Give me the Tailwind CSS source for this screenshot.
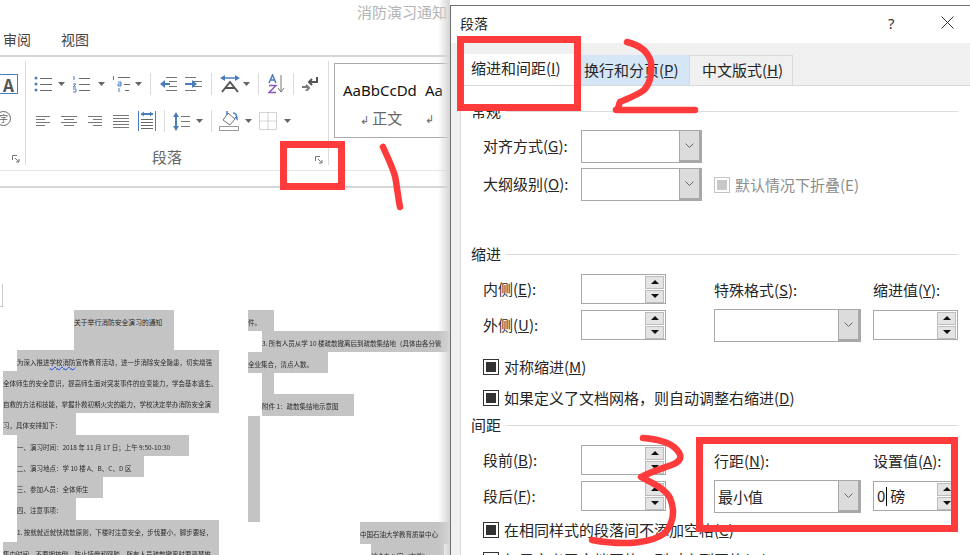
<!doctype html>
<html lang="zh-CN">
<head>
<meta charset="utf-8">
<script src="https://cdn.jsdelivr.net/npm/@tailwindcss/browser@4"></script>
<title>段落</title>
</head>
<body class="bg-white">
<div class="relative w-[970px] h-[555px] overflow-hidden bg-white text-[#262626] font-['Noto_Sans_CJK_SC','Noto_Sans',sans-serif]">

  <!-- Word window -->
  <div class="h-[23px] pl-[357px] text-[15px] leading-[23px] text-[#b4b4b4] whitespace-nowrap overflow-hidden">消防演习通知.docx</div>
  <div class="h-[34px] flex items-center text-[14px] text-[#444] border-b-2 border-[#d6d6d6]">
    <span class="ml-[3px]">审阅</span><span class="ml-[30px]">视图</span>
  </div>

  <div class="h-[113px] flex items-start overflow-hidden">
    <!-- font group tail -->
    <div class="w-[26px] h-[104px] mt-[4px] border-r border-[#dcdcdc] shrink-0">
      <div class="mt-[13px] w-[18px] h-[20px] border border-[#4a7ebb] border-l-0 flex items-center justify-center text-[17px] font-bold text-[#555] leading-none">A</div>
      <div class="mt-[17px] h-[20px] w-[11px] overflow-hidden flex justify-end">
        <div class="w-[15px] h-[15px] shrink-0 rounded-full border border-[#666] text-[9px] leading-[13px] text-center text-[#666]">字</div>
      </div>
      <div class="mt-[24px] pl-[12px]">
        <svg width="8" height="8" viewBox="0 0 8 8" fill="none" stroke="#777"><path d="M.5 5V.5H5M3 3l4 4M7 4v3H4"/></svg>
      </div>
    </div>

    <!-- paragraph group -->
    <div class="w-[303px] h-[104px] mt-[4px] border-r border-[#dcdcdc] shrink-0">
      <div class="mt-[13px] h-[20px] flex items-center">
        <svg class="ml-[8px]" width="18" height="18" viewBox="0 0 18 18" stroke="#6a6a6a"><circle cx="2" cy="3" r="1.5" fill="#4a7ebb" stroke="none"/><circle cx="2" cy="9" r="1.5" fill="#4a7ebb" stroke="none"/><circle cx="2" cy="15" r="1.5" fill="#4a7ebb" stroke="none"/><path d="M6 3.500h12M6 9.500h12M6 15.500h12"/></svg>
        <svg class="ml-[6px]" width="7" height="4" viewBox="0 0 7 4"><path d="M0 0h7L3.500 4z" fill="#666"/></svg>
        <svg class="ml-[7px]" width="18" height="18" viewBox="0 0 18 18" stroke="#6a6a6a"><path d="M2 1v4M1 9h3L1 12h3M1 14h3v3H1" stroke="#4a7ebb" fill="none"/><path d="M7 3.500h11M7 9.500h11M7 15.500h11"/></svg>
        <svg class="ml-[8px]" width="7" height="4" viewBox="0 0 7 4"><path d="M0 0h7L3.500 4z" fill="#666"/></svg>
        <svg class="ml-[7px]" width="18" height="18" viewBox="0 0 18 18" stroke="#6a6a6a" fill="none"><path d="M1.500 1v4" stroke="#4a7ebb"/><path d="M6 2.500h12M12 9.500h6M13 15.500h4"/><path d="M6 7h3v4H6v-2h3M7 13v4" stroke="#4a7ebb"/></svg>
        <svg class="ml-[5px]" width="7" height="4" viewBox="0 0 7 4"><path d="M0 0h7L3.500 4z" fill="#666"/></svg>
        <div class="ml-[8px] w-[1px] h-[22px] bg-[#dcdcdc]"></div>
        <svg class="ml-[9px]" width="17" height="14" viewBox="0 0 17 14" stroke="#777"><path d="M6 .500h11M9 4.500h8M9 9.500h8M6 13.500h11"/><path d="M0 7l5-4v3h5v2H5v3z" fill="#4a7ebb" stroke="none"/></svg>
        <svg class="ml-[8px]" width="17" height="14" viewBox="0 0 17 14" stroke="#777"><path d="M0 .500h11M8 4.500h9M8 9.500h9M0 13.500h11"/><path d="M12 7L7 3v3H0v2h7v3z" fill="#4a7ebb" stroke="none"/></svg>
        <div class="ml-[9px] w-[1px] h-[22px] bg-[#dcdcdc]"></div>
        <svg class="ml-[8px]" width="20" height="18" viewBox="0 0 20 18" fill="none"><path d="M4 3h12" stroke="#4a7ebb" stroke-width="1.500"/><path d="M0 3l5-3v6zM20 3l-5-3v6z" fill="#4a7ebb"/><path d="M2 17L10 7l8 10M5 13h10" stroke="#555" stroke-width="2"/></svg>
        <svg class="ml-[3px]" width="7" height="4" viewBox="0 0 7 4"><path d="M0 0h7L3.500 4z" fill="#666"/></svg>
        <div class="ml-[8px] w-[1px] h-[22px] bg-[#dcdcdc]"></div>
        <svg class="ml-[9px]" width="17" height="20" viewBox="0 0 17 20" fill="none"><path d="M1 9l3.500-8L8 9M2.500 6h4" stroke="#4a7ebb" stroke-width="1.500"/><path d="M1 11.500h7L1 18.500h7" stroke="#8a5bb5" stroke-width="1.500"/><path d="M13 1v17M10 14l3 4 3-4" stroke="#777"/></svg>
        <div class="ml-[8px] w-[1px] h-[22px] bg-[#dcdcdc]"></div>
        <svg class="ml-[8px]" width="16" height="14" viewBox="0 0 16 14" fill="none" stroke="#555" stroke-width="2"><path d="M15 0v5H8M10 2L7 5l3 3"/><path d="M0 10h6M4 8l3 3-3 3" stroke="#777"/></svg>
      </div>
      <div class="mt-[17px] h-[20px] flex items-center">
        <svg class="ml-[10px]" width="14" height="11" viewBox="0 0 14 11" stroke="#777"><path d="M0 .500h14M0 3.500h9M0 6.500h14M0 9.500h9"/></svg>
        <svg class="ml-[11px]" width="16" height="11" viewBox="0 0 16 11" stroke="#777"><path d="M0 .500h16M3 3.500h10M0 6.500h16M3 9.500h10"/></svg>
        <svg class="ml-[11px]" width="14" height="11" viewBox="0 0 14 11" stroke="#777"><path d="M0 .500h14M5 3.500h9M0 6.500h14M5 9.500h9"/></svg>
        <svg class="ml-[11px]" width="16" height="13" viewBox="0 0 16 13" stroke="#777"><path d="M0 .500h16M0 3.500h16M0 6.500h16M0 9.500h16M0 12.500h16"/></svg>
        <svg class="ml-[9px]" width="18" height="20" viewBox="0 0 18 20" fill="none"><path d="M.5 0v20M17.500 0v20" stroke="#4a7ebb"/><path d="M3 3h12" stroke="#4a7ebb" stroke-width="2"/><path d="M3 3l3-2.500v5zM15 3l-3-2.500v5z" fill="#4a7ebb"/><path d="M3 8.500h12M3 11.500h12M3 14.500h12M3 17.500h12" stroke="#666"/></svg>
        <div class="ml-[8px] w-[1px] h-[22px] bg-[#dcdcdc]"></div>
        <svg class="ml-[8px]" width="17" height="19" viewBox="0 0 17 19" fill="none"><path d="M3 2v15" stroke="#4a7ebb" stroke-width="2"/><path d="M3 0l3 5H0zM3 19l3-5H0z" fill="#4a7ebb"/><path d="M8 4.500h9M8 9.500h9M8 14.500h9" stroke="#777"/></svg>
        <svg class="ml-[6px]" width="7" height="4" viewBox="0 0 7 4"><path d="M0 0h7L3.500 4z" fill="#666"/></svg>
        <div class="ml-[8px] w-[1px] h-[22px] bg-[#dcdcdc]"></div>
        <svg class="ml-[7px]" width="20" height="20" viewBox="0 0 20 20" fill="none"><path d="M4 9l5-7 7 6-5 6z" stroke="#777"/><path d="M8 4V0M14 2c3 0 4 2 4 6l-2-2" stroke="#4a7ebb" stroke-width="1.500"/><path d="M.5 15.500h19v4H.5z" stroke="#999"/></svg>
        <svg class="ml-[6px]" width="7" height="4" viewBox="0 0 7 4"><path d="M0 0h7L3.500 4z" fill="#666"/></svg>
        <svg class="ml-[7px]" width="18" height="18" viewBox="0 0 18 18" fill="none" stroke="#aaa" stroke-dasharray="1 1"><path d="M.5.500h17v17H.5zM9 .500v17M.5 9h17"/></svg>
        <svg class="ml-[7px]" width="7" height="4" viewBox="0 0 7 4"><path d="M0 0h7L3.500 4z" fill="#666"/></svg>
      </div>
      <div class="mt-[17px] h-[17px] flex items-center justify-between pl-[126px] pr-[5px] text-[15px] text-[#666] leading-[19px]">
        <span>段落</span>
        <svg class="mt-[7px]" width="8" height="8" viewBox="0 0 8 8" fill="none" stroke="#777"><path d="M.5 5V.5H5M3 3l4 4M7 4v3H4"/></svg>
      </div>
    </div>

    <!-- styles gallery -->
    <div class="ml-[5px] mt-[6px] w-[150px] h-[75px] border border-[#ababab] flex shrink-0">
      <div class="w-[90px] pl-[8px] pt-[16px]">
        <div class="text-[15px] leading-[20px] text-[#111] font-['Noto_Sans',sans-serif] whitespace-nowrap">AaBbCcDd</div>
        <div class="mt-[8px] pl-[17px] text-[15px] leading-[20px] text-[#666] whitespace-nowrap"><span class="text-[11px]">↲</span> 正文</div>
      </div>
      <div class="pt-[16px]">
        <div class="text-[15px] leading-[20px] text-[#111] font-['Noto_Sans',sans-serif]">Aa</div>
        <div class="mt-[8px] text-[11px] leading-[20px] text-[#666]">↲</div>
      </div>
    </div>
  </div>

  <div class="h-[18px] border-t border-b-2 border-t-[#e6e6e6] border-b-[#d6d6d6]"></div>

  <!-- Document -->
  <div class="pt-[96px]">
    <div class="w-[3px] h-[23px] border-r border-b border-[#c8c8c8]"></div>
    <div class="mt-[3px] flex items-start text-[#2a2a2a] text-[6.5px] leading-[24px] whitespace-nowrap blur-[0.25px]">
      <div class="ml-[3px] w-[216px] shrink-0">
        <div class="ml-[71px] w-[100px] h-[40px] bg-[#c4c4c4] text-[6.8px]">关于举行消防安全演习的通知</div>
        <div class="ml-[14px] w-[202px] h-[21px] bg-[#c4c4c4] overflow-hidden">为深入推进<span class="underline decoration-wavy decoration-blue-700">学校消防</span>宣传教育活动，进一步消除安全隐患，切实增强</div>
        <div class="w-[216px] h-[21px] bg-[#c4c4c4] overflow-hidden">全体师生的安全意识，提高师生面对突发事件的应变能力，学会基本逃生、</div>
        <div class="w-[216px] h-[21px] bg-[#c4c4c4] overflow-hidden">自救的方法和技能，掌握扑救初期火灾的能力，学校决定举办消防安全演</div>
        <div class="w-[73px] h-[22px] bg-[#c4c4c4] overflow-hidden">习，具体安排如下：</div>
        <div class="ml-[14px] w-[172px] h-[21px] bg-[#c4c4c4] overflow-hidden">一、演习时间：2018 年 11 月 17 日；上午 9:50-10:30</div>
        <div class="ml-[14px] w-[127px] h-[21px] bg-[#c4c4c4] overflow-hidden">二、演习地点：学 10 楼 A、B、C、D 区</div>
        <div class="ml-[14px] w-[86px] h-[21px] bg-[#c4c4c4] overflow-hidden">三、参加人员：全体师生</div>
        <div class="ml-[14px] w-[59px] h-[22px] bg-[#c4c4c4] overflow-hidden">四、注意事项：</div>
        <div class="ml-[14px] w-[202px] h-[22px] bg-[#c4c4c4] overflow-hidden">1. 按就就近就快疏散原则，下楼时注意安全，步伐要小，脚步要轻，</div>
        <div class="w-[216px] h-[21px] bg-[#c4c4c4] overflow-hidden">集中时间，不要拥挤倒，防止摔倒和踩踏，所有人员疏散撤离时要严禁推</div>
      </div>
      <div class="ml-[29px] w-[202px] shrink-0">
        <div class="w-[26px] h-[21px] bg-[#c4c4c4]">件。</div>
        <div class="ml-[14px] w-[188px] h-[21px] bg-[#c4c4c4] overflow-hidden">3. 所有人员从学 10 楼疏散撤离后到疏散集结地（具体由各分管</div>
        <div class="w-[80px] h-[21px] bg-[#c4c4c4] overflow-hidden">全业集合，清点人数。</div>
        <div class="ml-[14px] w-[12px] h-[21px] bg-[#c4c4c4]"></div>
        <div class="ml-[14px] w-[92px] h-[22px] bg-[#c4c4c4] overflow-hidden">附件 1：疏散集结地示意图</div>
        <div class="w-[12px] h-[106px] bg-[#c4c4c4]"></div>
        <div class="ml-[112px] w-[90px] h-[22px] bg-[#c4c4c4] overflow-hidden">中国石油大学教育质量中心</div>
        <div class="ml-[123px] w-[73px] h-[21px] bg-[#c4c4c4] overflow-hidden">综合办公室（存档）</div>
      </div>
    </div>
  </div>

  <!-- dialog shadow -->
  <div class="absolute left-[438px] top-0 w-[12px] h-[555px] bg-linear-to-r from-transparent to-[#d4d4d4]"></div>

  <!-- Paragraph dialog -->
  <div class="absolute left-[450px] top-[5px] w-[520px] h-[550px] border-l border-t border-[#6f6f6f] bg-[#f0f0f0] flex flex-col overflow-hidden text-[15px] leading-[20px]">
    <div class="h-[37px] shrink-0 bg-white flex items-center pl-[9px] pb-[4px] text-[14px]">
      <span>段落</span>
      <span class="ml-[400px] text-[15px] text-[#333] font-['Noto_Sans',sans-serif]">?</span>
      <svg class="ml-[46px]" width="13" height="13" viewBox="0 0 13 13" stroke="#333" fill="none"><path d="M.5.500l12 12M12.500.500l-12 12"/></svg>
    </div>
    <div class="h-[42px] shrink-0 flex items-end pl-[12px]">
      <div class="w-[111px] h-[31px] bg-white pl-[8px] pt-[4px] whitespace-nowrap">缩进和间距(<span class="underline">I</span>)</div>
      <div class="w-[115px] h-[30px] bg-[#d5e6f6] pl-[10px] pt-[5px] whitespace-nowrap">换行和分页(<span class="underline">P</span>)</div>
      <div class="w-[104px] h-[30px] border border-b-0 border-[#d9d9d9] pl-[12px] pt-[4px] whitespace-nowrap">中文版式(<span class="underline">H</span>)</div>
    </div>
    <div class="flex-1 ml-[9px] bg-white border-l border-t border-[#d9d9d9] overflow-hidden">

      <div class="mt-[16px] h-[18px] flex items-center pl-[10px] pr-[12px]"><span>常规</span><div class="ml-[5px] flex-1 h-[1px] bg-[#dcdcdc]"></div></div>

      <div class="mt-[10px] h-[33px] flex items-center pl-[22px]">
        <span class="w-[98px] -mt-[2px]">对齐方式(<span class="underline">G</span>):</span>
        <div class="w-[121px] h-[33px] border border-[#a8a8a8] flex justify-end">
          <div class="w-[22px] bg-[#dcdcdc] border-l border-r-2 border-b-2 border-[#a8a8a8] flex items-center justify-center"><svg width="9" height="5" viewBox="0 0 9 5" fill="none" stroke="#666"><path d="M.5.500l4 4 4-4"/></svg></div>
        </div>
      </div>
      <div class="mt-[5px] h-[33px] flex items-center pl-[22px]">
        <span class="w-[98px] -mt-[2px]">大纲级别(<span class="underline">O</span>):</span>
        <div class="w-[121px] h-[33px] border border-[#a8a8a8] flex justify-end">
          <div class="w-[22px] bg-[#dcdcdc] border-l border-r-2 border-b-2 border-[#a8a8a8] flex items-center justify-center"><svg width="9" height="5" viewBox="0 0 9 5" fill="none" stroke="#666"><path d="M.5.500l4 4 4-4"/></svg></div>
        </div>
        <div class="ml-[12px] w-[16px] h-[16px] border border-[#c4c4c4] flex items-center justify-center"><div class="w-[10px] h-[10px] bg-[#c8c8c8]"></div></div>
        <span class="ml-[5px] text-[#8c8c8c]">默认情况下折叠(E)</span>
      </div>

      <div class="mt-[44px] h-[18px] flex items-center pl-[10px] pr-[12px]"><span>缩进</span><div class="ml-[5px] flex-1 h-[1px] bg-[#dcdcdc]"></div></div>

      <div class="mt-[11px] h-[68px] flex pl-[22px]">
        <div class="w-[231px] shrink-0">
          <div class="h-[30px] flex items-center">
            <span class="w-[98px]">内侧(<span class="underline">E</span>):</span>
            <div class="w-[85px] h-[30px] border border-[#a8a8a8] flex flex-col items-end justify-center pr-[1px]">
              <div class="w-[19px] h-[13px] bg-[#e4e4e4] border border-[#bcbcbc] flex items-center justify-center"><svg width="8" height="4" viewBox="0 0 8 4"><path d="M4 0l4 4H0z" fill="#111"/></svg></div>
              <div class="w-[19px] h-[13px] mt-[1px] bg-[#e4e4e4] border border-[#bcbcbc] flex items-center justify-center"><svg width="8" height="4" viewBox="0 0 8 4"><path d="M0 0h8L4 4z" fill="#111"/></svg></div>
            </div>
          </div>
          <div class="mt-[6px] h-[30px] flex items-center">
            <span class="w-[98px]">外侧(<span class="underline">U</span>):</span>
            <div class="w-[85px] h-[30px] border border-[#a8a8a8] flex flex-col items-end justify-center pr-[1px]">
              <div class="w-[19px] h-[13px] bg-[#e4e4e4] border border-[#bcbcbc] flex items-center justify-center"><svg width="8" height="4" viewBox="0 0 8 4"><path d="M4 0l4 4H0z" fill="#111"/></svg></div>
              <div class="w-[19px] h-[13px] mt-[1px] bg-[#e4e4e4] border border-[#bcbcbc] flex items-center justify-center"><svg width="8" height="4" viewBox="0 0 8 4"><path d="M0 0h8L4 4z" fill="#111"/></svg></div>
            </div>
          </div>
        </div>
        <div class="w-[159px] shrink-0">
          <div class="mt-[6px] h-[20px]">特殊格式(<span class="underline">S</span>):</div>
          <div class="mt-[9px] w-[147px] h-[33px] border border-[#a8a8a8] flex justify-end">
            <div class="w-[22px] bg-[#dcdcdc] border-l border-r-2 border-b-2 border-[#a8a8a8] flex items-center justify-center"><svg width="9" height="5" viewBox="0 0 9 5" fill="none" stroke="#666"><path d="M.5.500l4 4 4-4"/></svg></div>
          </div>
        </div>
        <div class="w-[85px] shrink-0">
          <div class="mt-[6px] h-[20px] whitespace-nowrap">缩进值(<span class="underline">Y</span>):</div>
          <div class="mt-[10px] w-[85px] h-[30px] border border-[#a8a8a8] flex flex-col items-end justify-center pr-[1px]">
            <div class="w-[19px] h-[13px] bg-[#e4e4e4] border border-[#bcbcbc] flex items-center justify-center"><svg width="8" height="4" viewBox="0 0 8 4"><path d="M4 0l4 4H0z" fill="#111"/></svg></div>
            <div class="w-[19px] h-[13px] mt-[1px] bg-[#e4e4e4] border border-[#bcbcbc] flex items-center justify-center"><svg width="8" height="4" viewBox="0 0 8 4"><path d="M0 0h8L4 4z" fill="#111"/></svg></div>
          </div>
        </div>
      </div>

      <div class="mt-[10px] h-[30px] flex items-center pl-[22px]">
        <div class="w-[16px] h-[16px] border border-[#333] flex items-center justify-center"><div class="w-[10px] h-[10px] bg-[#333]"></div></div>
        <span class="ml-[5px]">对称缩进(<span class="underline">M</span>)</span>
      </div>
      <div class="mt-[1px] h-[30px] flex items-center pl-[22px]">
        <div class="w-[16px] h-[16px] border border-[#333] flex items-center justify-center"><div class="w-[10px] h-[10px] bg-[#333]"></div></div>
        <span class="ml-[5px]">如果定义了文档网格，则自动调整右缩进(<span class="underline">D</span>)</span>
      </div>

      <div class="mt-[3px] h-[18px] flex items-center pl-[10px] pr-[12px]"><span>间距</span><div class="ml-[5px] flex-1 h-[1px] bg-[#dcdcdc]"></div></div>

      <div class="mt-[11px] h-[68px] flex pl-[22px]">
        <div class="w-[231px] shrink-0">
          <div class="h-[30px] flex items-center">
            <span class="w-[98px]">段前(<span class="underline">B</span>):</span>
            <div class="w-[85px] h-[30px] border border-[#a8a8a8] flex flex-col items-end justify-center pr-[1px]">
              <div class="w-[19px] h-[13px] bg-[#e4e4e4] border border-[#bcbcbc] flex items-center justify-center"><svg width="8" height="4" viewBox="0 0 8 4"><path d="M4 0l4 4H0z" fill="#111"/></svg></div>
              <div class="w-[19px] h-[13px] mt-[1px] bg-[#e4e4e4] border border-[#bcbcbc] flex items-center justify-center"><svg width="8" height="4" viewBox="0 0 8 4"><path d="M0 0h8L4 4z" fill="#111"/></svg></div>
            </div>
          </div>
          <div class="mt-[6px] h-[30px] flex items-center">
            <span class="w-[98px]">段后(<span class="underline">F</span>):</span>
            <div class="w-[85px] h-[30px] border border-[#a8a8a8] flex flex-col items-end justify-center pr-[1px]">
              <div class="w-[19px] h-[13px] bg-[#e4e4e4] border border-[#bcbcbc] flex items-center justify-center"><svg width="8" height="4" viewBox="0 0 8 4"><path d="M4 0l4 4H0z" fill="#111"/></svg></div>
              <div class="w-[19px] h-[13px] mt-[1px] bg-[#e4e4e4] border border-[#bcbcbc] flex items-center justify-center"><svg width="8" height="4" viewBox="0 0 8 4"><path d="M0 0h8L4 4z" fill="#111"/></svg></div>
            </div>
          </div>
        </div>
        <div class="w-[159px] shrink-0">
          <div class="mt-[6px] h-[20px]">行距(<span class="underline">N</span>):</div>
          <div class="mt-[9px] w-[147px] h-[33px] border border-[#a8a8a8] flex items-center justify-between">
            <span class="pl-[3px]">最小值</span>
            <div class="w-[22px] h-full bg-[#dcdcdc] border-l border-r-2 border-b-2 border-[#a8a8a8] flex items-center justify-center"><svg width="9" height="5" viewBox="0 0 9 5" fill="none" stroke="#666"><path d="M.5.500l4 4 4-4"/></svg></div>
          </div>
        </div>
        <div class="w-[85px] shrink-0">
          <div class="mt-[6px] h-[20px] whitespace-nowrap">设置值(<span class="underline">A</span>):</div>
          <div class="mt-[10px] w-[85px] h-[30px] border border-[#a8a8a8] flex items-center justify-between pr-[1px]">
            <span class="pl-[3px] flex items-center whitespace-nowrap">0<span class="w-[1px] h-[19px] bg-black ml-[1px] mr-[3px]"></span>磅</span>
            <div class="flex flex-col">
              <div class="w-[19px] h-[13px] bg-[#e4e4e4] border border-[#bcbcbc] flex items-center justify-center"><svg width="8" height="4" viewBox="0 0 8 4"><path d="M4 0l4 4H0z" fill="#111"/></svg></div>
              <div class="w-[19px] h-[13px] mt-[1px] bg-[#e4e4e4] border border-[#bcbcbc] flex items-center justify-center"><svg width="8" height="4" viewBox="0 0 8 4"><path d="M0 0h8L4 4z" fill="#111"/></svg></div>
            </div>
          </div>
        </div>
      </div>

      <div class="mt-[2px] h-[30px] flex items-center pl-[22px]">
        <div class="w-[16px] h-[16px] border border-[#333] flex items-center justify-center"><div class="w-[10px] h-[10px] bg-[#333]"></div></div>
        <span class="ml-[5px]">在相同样式的段落间不添加空格(<span class="underline">C</span>)</span>
      </div>
      <div class="h-[30px] flex items-center pl-[22px]">
        <div class="w-[16px] h-[16px] border border-[#333] flex items-center justify-center"><div class="w-[10px] h-[10px] bg-[#333]"></div></div>
        <span class="ml-[5px]">如果定义了文档网格，则对齐到网格(<span class="underline">W</span>)</span>
      </div>
    </div>
  </div>

  <!-- Hand-drawn annotations -->
  <div class="absolute left-[280px] top-[141px] w-[65px] h-[49px] border-[7px] border-[#ff3b3b]"></div>
  <div class="absolute left-[457px] top-[36px] w-[124px] h-[75px] border-[7px] border-[#ff3b3b]"></div>
  <div class="absolute left-[696px] top-[437px] w-[262px] h-[95px] border-[7px] border-[#ff3b3b]"></div>
  <svg class="absolute left-0 top-0 pointer-events-none" width="970" height="555" viewBox="0 0 970 555" fill="none" stroke="#ff3b3b" stroke-width="6.500" stroke-linecap="round" stroke-linejoin="round">
    <path d="M383 147C388 158 392 166 395 176C397 186 398 197 400 207"/>
    <path d="M627 42C640 45 648 52 651 62C652 74 650 84 644 90C636 96 626 99 620 102C618 105 620 108 616 110C640 110 670 110 695 110"/>
    <path d="M643 438C655 439 668 442 674 447C683 455 682 460 674 464C664 468 650 472 641 477C650 482 665 488 670 498C675 510 674 522 665 533C652 543 625 546 592 540"/>
  </svg>
</div>
</body>
</html>
